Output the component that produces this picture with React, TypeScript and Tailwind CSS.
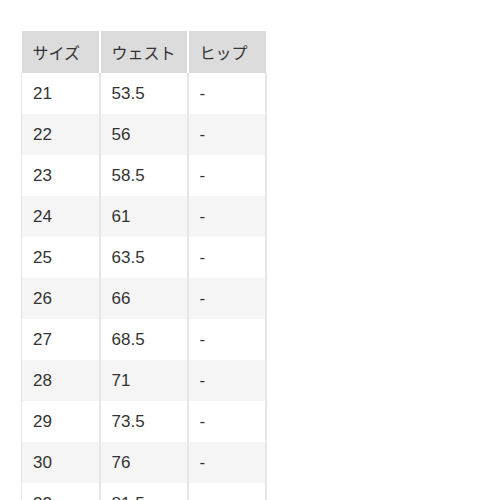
import React from 'react';

const rows: [string, string, string][] = [
  ['21', '53.5', '-'],
  ['22', '56', '-'],
  ['23', '58.5', '-'],
  ['24', '61', '-'],
  ['25', '63.5', '-'],
  ['26', '66', '-'],
  ['27', '68.5', '-'],
  ['28', '71', '-'],
  ['29', '73.5', '-'],
  ['30', '76', '-'],
  ['32', '81.5', '-'],
];

const num = { fontFamily: '"Liberation Sans", sans-serif' };

export default function App() {
  return (
    <div
      className="w-[500px] h-[500px] overflow-hidden bg-white pt-[31px] pl-[21px] text-[#333]"
      style={{ fontFamily: '"Noto Sans CJK JP", "Liberation Sans", sans-serif' }}
    >
      <table className="border-collapse text-[16px] leading-none">
        <thead>
          <tr className="bg-[#dcdcdc] h-[42px]">
            <th className="w-[78px] pl-[11px] text-left font-normal border-r-2 border-white">サイズ</th>
            <th className="w-[88px] pl-[11px] text-left font-normal border-r-2 border-white">ウェスト</th>
            <th className="w-[78px] pl-[11px] text-left font-normal">ヒップ</th>
          </tr>
        </thead>
        <tbody>
          {rows.map((r, i) => (
            <tr key={r[0]} className={`h-[41px] ${i % 2 === 1 ? 'bg-[#f5f5f5]' : 'bg-white'}`}>
              <td className="pl-[11px] border-l border-r-2 border-[#e6e6e6] text-[17px]" style={num}>{r[0]}</td>
              <td className="pl-[11px] border-r-2 border-[#e6e6e6] text-[17px]" style={num}>{r[1]}</td>
              <td className="pl-[11px] border-r-2 border-[#e6e6e6] text-[17px]" style={num}>{r[2]}</td>
            </tr>
          ))}
        </tbody>
      </table>
    </div>
  );
}
